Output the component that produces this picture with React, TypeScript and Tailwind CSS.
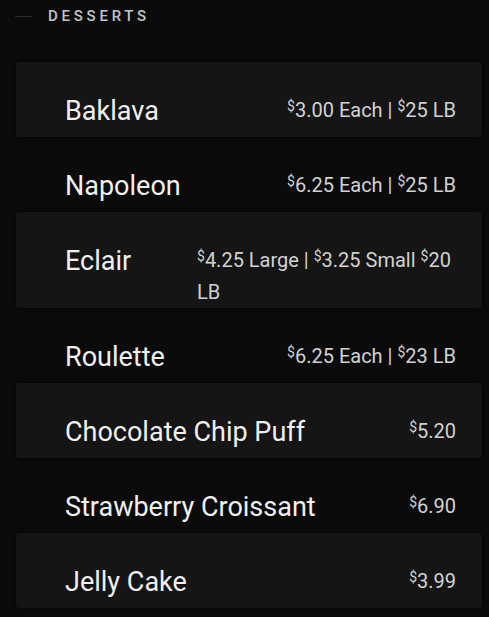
import React from "react";

type Item = { name: string; price: React.ReactNode };

const D = () => <span className="text-[14px] align-[0.4em] leading-none">$</span>;

const items: Item[] = [
  { name: "Baklava", price: <><D />3.00 Each | <D />25 LB</> },
  { name: "Napoleon", price: <><D />6.25 Each | <D />25 LB</> },
  { name: "Eclair", price: <><D />4.25 Large | <D />3.25 Small <D />20 LB</> },
  { name: "Roulette", price: <><D />6.25 Each | <D />23 LB</> },
  { name: "Chocolate Chip Puff", price: <><D />5.20</> },
  { name: "Strawberry Croissant", price: <><D />6.90</> },
  { name: "Jelly Cake", price: <><D />3.99</> },
];

export default function App() {
  return (
    <div
      className="min-h-[617px] w-[489px] bg-[#0b0b0b] overflow-hidden"
      style={{ fontFamily: "Roboto, 'Noto Sans', sans-serif" }}
    >
      <div className="flex items-center pt-[6px] pl-[15px] h-[26px]">
        <div className="h-px w-[17px] bg-[#2a2a2a]" />
        <div className="ml-[16px] text-[15px] leading-[20px] tracking-[0.25em] font-medium text-[#c4c4c4]">
          DESSERTS
        </div>
      </div>
      <div className="mt-[36px] ml-[16px] mr-[7px] flex flex-col">
        {items.map((it, i) => (
          <div
            key={it.name}
            className={
              "flex items-start justify-between min-h-[75px] pt-[32px] pl-[49px] pr-[26px] rounded-[4px] " +
              (i % 2 === 0 ? "bg-[#151515] shadow-[0_0_6px_rgba(0,0,0,0.7)]" : "bg-transparent")
            }
          >
            <div className="mt-[1px] text-[27px] leading-[32px] text-[#f0f0f0] whitespace-nowrap">
              {it.name}
            </div>
            <div className="max-w-[259px] text-[20px] leading-[32px] text-[#d2d2d2] text-left ml-4">
              {it.price}
            </div>
          </div>
        ))}
      </div>
    </div>
  );
}
